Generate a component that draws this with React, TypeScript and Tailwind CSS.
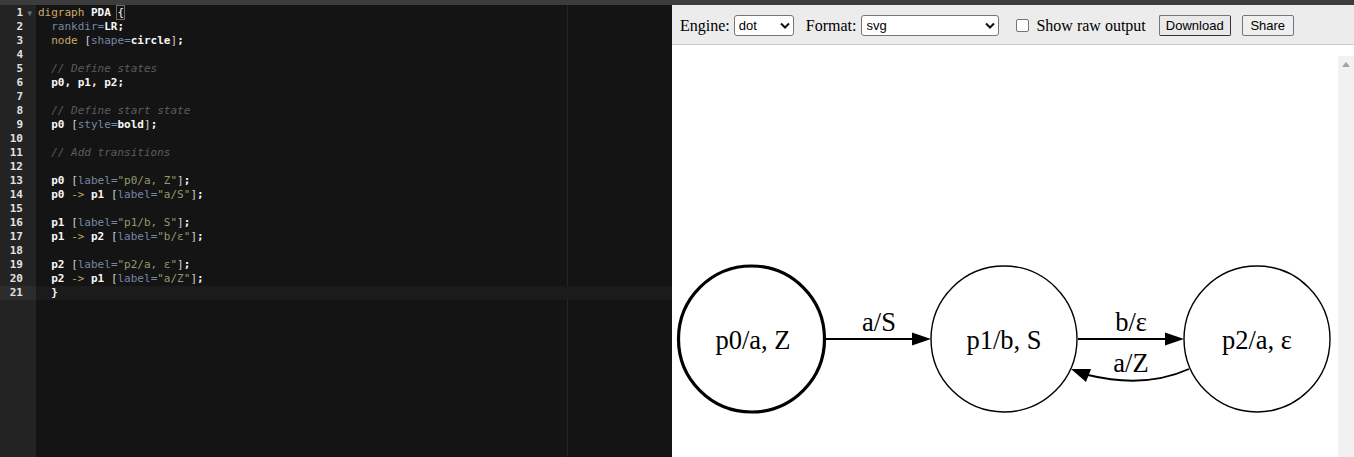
const KW = "text-[#cda869]";
const ATTR = "text-[#7587a6]";
const STR = "text-[#8f9d6a]";
const ID = "text-[#f8f8f8] font-bold";
const PUN = "text-[#d0d0d0]";
const CMT = "text-[#5f5a60] italic";

type Tok = [string, string];

const lines: Tok[][] = [
  [["digraph", KW], [" ", ""], ["PDA", ID], [" ", ""], ["{", "brace"]],
  [["  rankdir", ATTR], ["=", ATTR], ["LR", ID], [";", ID]],
  [["  node", KW], [" ", ""], ["[", PUN], ["shape", ATTR], ["=", ATTR], ["circle", ID], ["]", PUN], [";", ID]],
  [],
  [["  // Define states", CMT]],
  [["  p0, p1, p2;", ID]],
  [],
  [["  // Define start state", CMT]],
  [["  p0", ID], [" ", ""], ["[", PUN], ["style", ATTR], ["=", ATTR], ["bold", ID], ["]", PUN], [";", ID]],
  [],
  [["  // Add transitions", CMT]],
  [],
  [["  p0", ID], [" ", ""], ["[", PUN], ["label", ATTR], ["=", ATTR], ['"p0/a, Z"', STR], ["]", PUN], [";", ID]],
  [["  p0", ID], [" ", ""], ["->", KW], [" ", ""], ["p1", ID], [" ", ""], ["[", PUN], ["label", ATTR], ["=", ATTR], ['"a/S"', STR], ["]", PUN], [";", ID]],
  [],
  [["  p1", ID], [" ", ""], ["[", PUN], ["label", ATTR], ["=", ATTR], ['"p1/b, S"', STR], ["]", PUN], [";", ID]],
  [["  p1", ID], [" ", ""], ["->", KW], [" ", ""], ["p2", ID], [" ", ""], ["[", PUN], ["label", ATTR], ["=", ATTR], ['"b/ε"', STR], ["]", PUN], [";", ID]],
  [],
  [["  p2", ID], [" ", ""], ["[", PUN], ["label", ATTR], ["=", ATTR], ['"p2/a, ε"', STR], ["]", PUN], [";", ID]],
  [["  p2", ID], [" ", ""], ["->", KW], [" ", ""], ["p1", ID], [" ", ""], ["[", PUN], ["label", ATTR], ["=", ATTR], ['"a/Z"', STR], ["]", PUN], [";", ID]],
  [["  }", ID]],
];

const Chevron = () => (
  <svg width="10" height="7" viewBox="0 0 10 7" className="shrink-0">
    <path d="M1 1.5 L5 5.5 L9 1.5" fill="none" stroke="#111" strokeWidth="2" />
  </svg>
);

function Editor() {
  return (
    <div className="relative flex w-[672px] shrink-0 bg-[#141414] pt-[1px] font-['DejaVu_Sans_Mono',monospace] text-[11px]">
      <div className="absolute left-0 top-0 h-full w-[36px] bg-[#232323]" />
      <div className="relative w-[36px] shrink-0 text-[#e2e2e2]">
        {lines.map((_, i) => (
          <div
            key={i}
            className={`relative h-[14px] pr-[13px] text-right font-bold leading-[14px] ${i === 20 ? "bg-[#2c2c2c]" : ""}`}
          >
            {i + 1}
            {i === 0 && (
              <span className="absolute right-[4px] top-[1px] text-[8px] font-normal text-[#6a6a6a]">▼</span>
            )}
          </div>
        ))}
      </div>
      <div className="relative flex-1">
        <div className="absolute left-[531px] top-[-1px] h-[calc(100%+1px)] w-px bg-[#262626]" />
        {lines.map((toks, i) => (
          <div
            key={i}
            className={`relative h-[14px] whitespace-pre pl-[2px] leading-[14px] ${i === 20 ? "bg-[#1b1b1b]" : ""}`}
          >
            {toks.map(([t, c], j) =>
              c === "brace" ? (
                <span key={j} className="text-[#f8f8f8] outline outline-1 outline-[#6a6a6a]">
                  {t}
                </span>
              ) : (
                <span key={j} className={c}>
                  {t}
                </span>
              )
            )}
          </div>
        ))}
      </div>
    </div>
  );
}

function Toolbar() {
  return (
    <div className="flex h-[40px] shrink-0 items-center border-b border-[#cccccc] bg-[#ececec] pl-[8px] pt-[2px] font-['Liberation_Serif',serif] text-[16px] text-black">
      <span>Engine:</span>
      <div className="ml-[4px] flex h-[21px] w-[60px] items-center justify-between rounded-[3px] border border-[#767676] bg-white pl-[4px] pr-[3px] font-['Liberation_Sans',sans-serif] text-[13px]">
        <span>dot</span>
        <Chevron />
      </div>
      <span className="ml-[12px]">Format:</span>
      <div className="ml-[5px] flex h-[21px] w-[138px] items-center justify-between rounded-[3px] border border-[#767676] bg-white pl-[4px] pr-[3px] font-['Liberation_Sans',sans-serif] text-[13px]">
        <span>svg</span>
        <Chevron />
      </div>
      <div className="ml-[17px] h-[13px] w-[13px] rounded-[2px] border border-[#767676] bg-white" />
      <span className="ml-[7px]">Show raw output</span>
      <div className="ml-[13px] flex h-[21px] w-[72px] items-center justify-center rounded-[2px] border border-[#767676] border-b-[#333] border-r-[#333] bg-[#e9e9e9] font-['Liberation_Sans',sans-serif] text-[13px]">
        Download
      </div>
      <div className="ml-[11px] flex h-[21px] w-[52px] items-center justify-center rounded-[2px] border border-[#767676] bg-[#efefef] font-['Liberation_Sans',sans-serif] text-[13px]">
        Share
      </div>
    </div>
  );
}

function Graph() {
  const font = { fontFamily: "'Liberation Serif', serif", fontSize: 26.5 };
  return (
    <svg width="666" height="412" viewBox="672 45 666 412" className="block shrink-0">
      <rect x="672" y="45" width="666" height="412" fill="#fff" />
      <circle cx="751.5" cy="339" r="73" fill="none" stroke="#000" strokeWidth="3.2" />
      <circle cx="1004" cy="339" r="73" fill="none" stroke="#000" strokeWidth="1.4" />
      <circle cx="1257" cy="339" r="73" fill="none" stroke="#000" strokeWidth="1.4" />
      <g style={font} textAnchor="middle" fill="#000">
        <text x="753" y="349">p0/a, Z</text>
        <text x="1004" y="349">p1/b, S</text>
        <text x="1257" y="349">p2/a, ε</text>
        <text x="879" y="331">a/S</text>
        <text x="1131" y="331">b/ε</text>
        <text x="1131" y="372">a/Z</text>
      </g>
      <line x1="826" y1="339" x2="913" y2="339" stroke="#000" strokeWidth="1.9" />
      <polygon points="912,332.5 931,339 912,345.5" fill="#000" />
      <line x1="1078" y1="339" x2="1166" y2="339" stroke="#000" strokeWidth="1.9" />
      <polygon points="1165,332.5 1184,339 1165,345.5" fill="#000" />
      <path d="M1189,369 C1160,382 1125,384 1088,375" fill="none" stroke="#000" strokeWidth="1.9" />
      <polygon points="1071,369 1091,369 1086,382" fill="#000" />
    </svg>
  );
}

export default function App() {
  return (
    <div className="flex h-[457px] w-[1354px] flex-col overflow-hidden bg-[#3c3c3c]">
      <div className="h-[5px] shrink-0 bg-[#3c3c3c]" />
      <div className="flex min-h-0 flex-1">
        <Editor />
        <div className="flex min-w-0 flex-1 flex-col bg-white">
          <Toolbar />
          <div className="flex min-h-0 flex-1">
            <Graph />
            <div className="mt-[11px] flex w-[16px] flex-col items-center bg-[#f1f1f1] pt-[6px]">
              <svg width="8" height="5" viewBox="0 0 8 5">
                <path d="M0 5 L4 0 L8 5 Z" fill="#a3a3a3" />
              </svg>
            </div>
          </div>
        </div>
      </div>
    </div>
  );
}
